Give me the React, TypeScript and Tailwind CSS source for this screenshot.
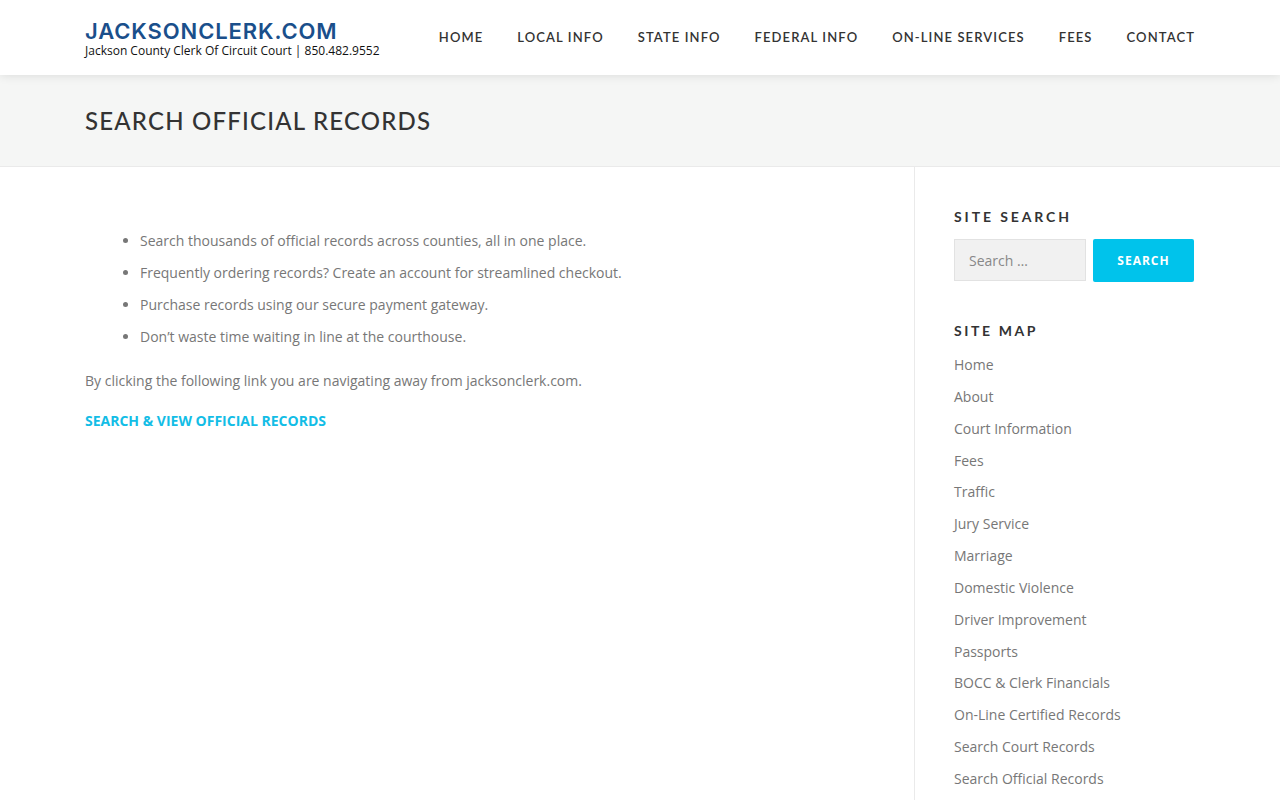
const navItems = ["Home", "Local Info", "State Info", "Federal Info", "On-Line Services", "Fees", "Contact"];

const bullets = [
  "Search thousands of official records across counties, all in one place.",
  "Frequently ordering records? Create an account for streamlined checkout.",
  "Purchase records using our secure payment gateway.",
  "Don’t waste time waiting in line at the courthouse.",
];

const siteMap = [
  "Home",
  "About",
  "Court Information",
  "Fees",
  "Traffic",
  "Jury Service",
  "Marriage",
  "Domestic Violence",
  "Driver Improvement",
  "Passports",
  "BOCC & Clerk Financials",
  "On-Line Certified Records",
  "Search Court Records",
  "Search Official Records",
];

export default function App() {
  return (
    <div className="min-h-screen bg-white font-['Open_Sans',sans-serif] text-[14px] text-[#777]">
      {/* Header */}
      <header className="relative z-10 h-[75px] bg-white shadow-[0_0_10px_rgba(0,0,0,0.12)]">
        <div className="mx-auto flex h-full w-[1110px] items-center justify-between">
          <div className="flex flex-col">
            <span className="font-['Inter',sans-serif] text-[22px] font-semibold leading-[26px] tracking-[0.9px] text-[#1a4f8b]">
              JACKSONCLERK.COM
            </span>
            <span className="text-[12px] leading-[14px] text-[#111]">
              Jackson County Clerk Of Circuit Court | 850.482.9552
            </span>
          </div>
          <nav className="flex items-center gap-[34px] pt-[1px]">
            {navItems.map((item) => (
              <a
                key={item}
                className="font-['Lato',sans-serif] text-[13px] font-semibold uppercase tracking-[1.1px] text-[#333]"
              >
                {item}
              </a>
            ))}
          </nav>
        </div>
      </header>

      {/* Page header */}
      <div className="h-[92px] border-b border-[#eaeaea] bg-[#f5f6f5]">
        <div className="mx-auto flex h-full w-[1110px] items-center">
          <h1 className="font-['Lato',sans-serif] text-[24px] font-medium tracking-[1.2px] text-[#333]">
            SEARCH OFFICIAL RECORDS
          </h1>
        </div>
      </div>

      {/* Content */}
      <div className="mx-auto flex w-[1110px]">
        <main className="w-[830px] border-r border-[#eaeaea] pr-[30px] pt-[58px]">
          <ul className="ml-[55px] list-disc leading-[32px] marker:text-[#777]">
            {bullets.map((b) => (
              <li key={b}>{b}</li>
            ))}
          </ul>
          <p className="mt-[12px] leading-[32px]">
            By clicking the following link you are navigating away from jacksonclerk.com.
          </p>
          <a className="mt-[14px] block text-[14px] font-bold leading-[20px] text-[#13bde6]">
            SEARCH &amp; VIEW OFFICIAL RECORDS
          </a>
        </main>

        <aside className="min-h-[633px] flex-1 pl-[39px] pt-[41px]">
          <h4 className="font-['Lato',sans-serif] text-[14px] font-bold uppercase leading-[18px] tracking-[2.9px] text-[#333]">
            Site Search
          </h4>
          <div className="mt-[13px] flex gap-[7px]">
            <div className="flex h-[42px] w-[132px] items-center border border-[#e2e2e2] bg-[#f1f1f1] px-[14px] text-[14px] text-[#888]">
              Search …
            </div>
            <button className="h-[43px] w-[101px] rounded-[2px] bg-[#00c3eb] text-[12px] font-bold uppercase tracking-[1px] text-white">
              Search
            </button>
          </div>

          <h4 className="mt-[40px] font-['Lato',sans-serif] text-[14px] font-bold uppercase leading-[18px] tracking-[2.6px] text-[#333]">
            Site Map
          </h4>
          <ul className="mt-[9px] leading-[31.85px] text-[#777]">
            {siteMap.map((s) => (
              <li key={s}>{s}</li>
            ))}
          </ul>
        </aside>
      </div>
    </div>
  );
}
